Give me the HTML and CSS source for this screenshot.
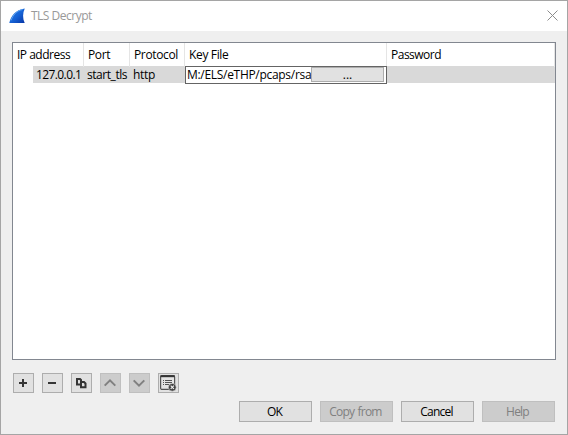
FILE: index.html
```html
<!DOCTYPE html>
<html lang="en">
<head>
<meta charset="utf-8">
<title>TLS Decrypt</title>
<link rel="stylesheet" href="styles.css">
</head>
<body>
<main class="dialog">
  <header class="titlebar">
    <svg class="logo" width="18" height="16" viewBox="0 0 18 16">
      <defs><linearGradient id="fin" x1="0" y1="0" x2="1" y2="1"><stop offset="0" stop-color="#2b7be0"/><stop offset=".5" stop-color="#1765d8"/><stop offset="1" stop-color="#0735a5"/></linearGradient></defs>
      <path d="M.3 15C2 7.500 6.500 1.500 15.800.4C13.600 5 13.500 10.500 15.700 15Z" fill="url(#fin)"/>
      <path d="M2 12.500C4 7 7.500 3 13.500 1.500" fill="none" stroke="#5fa5f0" stroke-width="1"/>
    </svg>
    <span class="title">TLS Decrypt</span>
    <svg class="close" width="11" height="11" viewBox="0 0 11 11"><path d="M.5.5L10.500 10.500M10.500.5L.5 10.500" fill="none" stroke="#8c8c8c"/></svg>
  </header>
  <section class="tree">
    <div class="grid head">
      <span class="c-ip">IP address</span><span class="c-port">Port</span><span class="c-proto">Protocol</span><span class="c-key">Key File</span><span class="c-pass">Password</span>
    </div>
    <div class="grid row">
      <span class="v-ip">127.0.0.1</span><span class="v-port">start_tls</span><span class="v-proto">http</span>
      <div class="editor"><span class="path">M:/ELS/eTHP/pcaps/rsa</span><button class="browse">...</button></div>
      <span class="v-pass"></span>
    </div>
  </section>
  <div class="tools">
    <button class="tool"><svg width="19" height="18" viewBox="0 0 19 18"><path d="M5 9H13M9 5V13" stroke="#353535" stroke-width="2" fill="none"/></svg></button>
    <button class="tool"><svg width="19" height="18" viewBox="0 0 19 18"><path d="M5 9H13" stroke="#353535" stroke-width="2" fill="none"/></svg></button>
    <button class="tool"><svg width="19" height="18" viewBox="0 0 19 18"><path d="M5 5H8L9 6V10.500H5Z" stroke="#353535" stroke-width="2" fill="#e1e1e1"/><path d="M9 8H12L13.500 9.500V13.300H9Z" stroke="#353535" stroke-width="2" fill="#e1e1e1"/></svg></button>
    <button class="tool off"><svg width="19" height="18" viewBox="0 0 19 18"><path d="M3.700 11.600L9 6.300L14.300 11.600" stroke="#808080" stroke-width="2" fill="none"/></svg></button>
    <button class="tool off"><svg width="19" height="18" viewBox="0 0 19 18"><path d="M3.700 6.400L9 11.700L14.300 6.400" stroke="#808080" stroke-width="2" fill="none"/></svg></button>
    <button class="tool"><svg width="19" height="18" viewBox="0 0 19 18"><rect x="1.600" y="1.600" width="14" height="13.800" rx="1.500" fill="#e4e4e4" stroke="#555" stroke-width="1.200"/><path d="M1.500 2.200H15.700" stroke="#353535" stroke-width="2"/><path d="M4 6.500H5M6 6.500H13M4 8.500H5M6 8.500H13M4 10.500H5M6 10.500H10" stroke="#555"/><circle cx="13.300" cy="13.300" r="3.900" fill="#404040" stroke="#ddd" stroke-width=".6"/><path d="M11.700 11.700L14.900 14.900M14.900 11.700L11.700 14.900" stroke="#eee" stroke-width="1.200"/></svg></button>
  </div>
  <footer class="actions">
    <button class="btn ok">OK</button><button class="btn off">Copy from</button><button class="btn">Cancel</button><button class="btn off">Help</button>
  </footer>
</main>
</body>
</html>
```
FILE: styles.css
```css
* { box-sizing: border-box; }
body { margin: 0; font: 12px/16px "Open Sans", sans-serif; color: #000; }
button { font: inherit; color: inherit; margin: 0; padding: 0; }
svg { display: block; }
.dialog { width: 568px; height: 435px; border: 1px solid #a5a5a5; background: #efefef; overflow: hidden; }
.titlebar { height: 30px; background: #fff; display: flex; align-items: flex-start; padding: 7px 9px 0 8px; color: #999; }
.title { margin-left: 4px; letter-spacing: -.5px; }
.close { margin: 2px 0 0 auto; }
.tree { width: 544px; height: 318px; margin: 11px 0 0 11px; border: 1px solid #828790; background: #fff; }
.grid { display: grid; grid-template-columns: 71px 46px 55px 202px 168px; white-space: nowrap; }
.head { height: 23px; line-height: 24px; letter-spacing: -.35px; }
.head span { border-right: 1px solid #e5e5e5; padding-left: 4px; }
.head .c-ip { letter-spacing: -.5px; }
.head .c-pass { letter-spacing: -.5px; }
.row { height: 17px; background: linear-gradient(90deg, #fff 20px, #d9d9d9 20px); line-height: 17px; letter-spacing: -.3px; }
.v-ip { padding-left: 23px; letter-spacing: -.6px; }
.v-port, .v-proto { padding-left: 3px; }
.v-port { letter-spacing: -.45px; }
.editor { display: flex; border: 1px solid #646464; background: #fff; padding: 0 2px 0 1px; line-height: 16px; }
.path { width: 124px; overflow: hidden; }
.browse { flex: 1; height: 15px; border: 1px solid #adadad; background: #e1e1e1; line-height: 13px; }
.tools { display: flex; gap: 8px; margin: 13px 0 0 12px; }
.tool { width: 21px; height: 20px; border: 1px solid #adadad; background: #e1e1e1; }
.actions { display: flex; justify-content: flex-end; gap: 8px; margin: 8px 12px 0 0; }
.btn { width: 73px; height: 21px; border: 1px solid #adadad; background: #e1e1e1; line-height: 19px; letter-spacing: -.8px; padding-right: 2px; word-spacing: 1px; }
.off { background: #ccc; border-color: #bfbfbf; color: #808080; }
```
